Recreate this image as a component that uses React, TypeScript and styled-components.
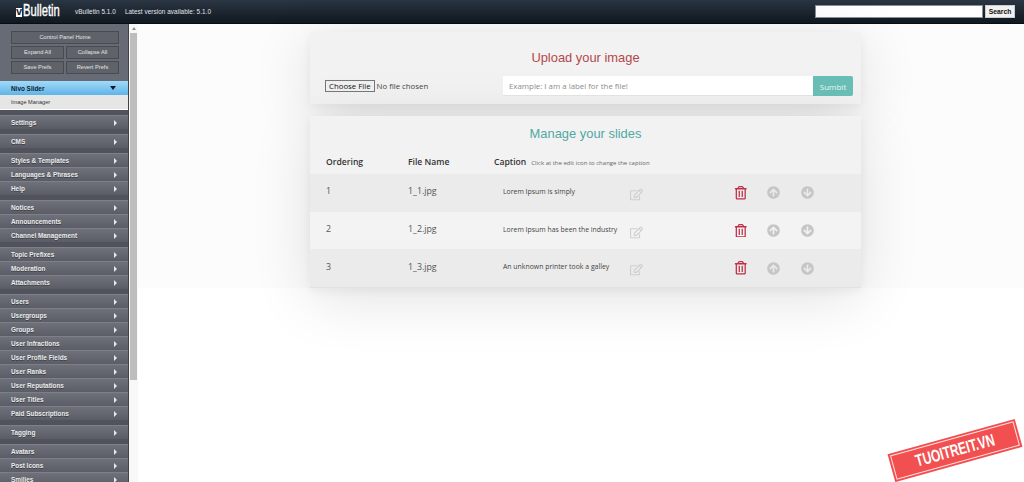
import { createGlobalStyle, styled } from 'styled-components'
import { FaArrowCircleUp, FaArrowCircleDown, FaRegEdit, FaRegTrashAlt } from 'react-icons/fa'

const groups = [
  ['Settings'],
  ['CMS'],
  ['Styles & Templates', 'Languages & Phrases', 'Help'],
  ['Notices', 'Announcements', 'Channel Management'],
  ['Topic Prefixes', 'Moderation', 'Attachments'],
  ['Users', 'Usergroups', 'Groups', 'User Infractions', 'User Profile Fields', 'User Ranks', 'User Reputations', 'User Titles', 'Paid Subscriptions'],
  ['Tagging'],
  ['Avatars', 'Post Icons', 'Smilies'],
]

const slides = [
  { order: 1, file: '1_1.jpg', caption: 'Lorem Ipsum is simply' },
  { order: 2, file: '1_2.jpg', caption: 'Lorem Ipsum has been the industry' },
  { order: 3, file: '1_3.jpg', caption: 'An unknown printer took a galley' },
]

function App() {
  return (
    <Page>
      <GlobalStyle />
      <Header>
        <Logo>
          <LogoMark>v</LogoMark>
          <LogoText>Bulletin</LogoText>
        </Logo>
        <Version>vBulletin 5.1.0</Version>
        <Version>Latest version available: 5.1.0</Version>
        <SearchBox>
          <SearchInput />
          <SearchButton>Search</SearchButton>
        </SearchBox>
      </Header>
      <Body>
        <Sidebar>
          <SideButtons>
            <SideButton $wide>Control Panel Home</SideButton>
            <SideButton>Expand All</SideButton>
            <SideButton>Collapse All</SideButton>
            <SideButton>Save Prefs</SideButton>
            <SideButton>Revert Prefs</SideButton>
          </SideButtons>
          <ActiveItem>
            Nivo Slider
            <ArrowDown />
          </ActiveItem>
          <SubItem>Image Manager</SubItem>
          {groups.map((group) => (
            <NavGroup key={group[0]}>
              {group.map((item) => (
                <NavItem key={item}>
                  {item}
                  <ArrowRight />
                </NavItem>
              ))}
            </NavGroup>
          ))}
        </Sidebar>
        <Scrollbar>
          <ScrollUp />
          <ScrollThumb />
        </Scrollbar>
        <Main>
          <Backdrop>
            <UploadPanel>
              <UploadTitle>Upload your image</UploadTitle>
              <UploadRow>
                <FileField>
                  <ChooseButton>Choose File</ChooseButton>
                  No file chosen
                </FileField>
                <LabelInput placeholder="Example: I am a label for the file!" />
                <SubmitButton>Sumbit</SubmitButton>
              </UploadRow>
            </UploadPanel>
            <ManagePanel>
              <ManageTitle>Manage your slides</ManageTitle>
              <HeadRow>
                <OrderCol>Ordering</OrderCol>
                <FileCol>File Name</FileCol>
                <HeadCaption>
                  Caption
                  <Hint>Click at the edit icon to change the caption</Hint>
                </HeadCaption>
              </HeadRow>
              {slides.map((slide) => (
                <SlideRow key={slide.order} $odd={slide.order % 2 === 1}>
                  <OrderCol>{slide.order}</OrderCol>
                  <FileCol>{slide.file}</FileCol>
                  <CaptionCol>{slide.caption}</CaptionCol>
                  <EditIcon><FaRegEdit /></EditIcon>
                  <TrashIcon><FaRegTrashAlt /></TrashIcon>
                  <MoveIcon><FaArrowCircleUp /></MoveIcon>
                  <MoveIcon><FaArrowCircleDown /></MoveIcon>
                </SlideRow>
              ))}
            </ManagePanel>
          </Backdrop>
        </Main>
      </Body>
      <Stamp>
        <StampInner>
          <StampText>TUOITREIT.VN</StampText>
        </StampInner>
      </Stamp>
    </Page>
  )
}

export default App

const GlobalStyle = createGlobalStyle`
  html, body {
    margin: 0;
    padding: 0;
    background: #fff;
  }
  * {
    box-sizing: border-box;
  }
`

const Page = styled.div`
  position: relative;
  width: 1024px;
  height: 482px;
  overflow: hidden;
  font-family: "Liberation Sans", Arial, sans-serif;
`

const Header = styled.header`
  display: flex;
  align-items: center;
  height: 24px;
  padding: 0 9px 1px 16px;
  background: linear-gradient(#2b3644, #101820);
  border-bottom: 1px solid #0a0d10;
`

const Logo = styled.div`
  display: flex;
  align-items: center;
  width: 59px;
  color: #fff;
`

const LogoMark = styled.span`
  width: 9px;
  height: 9px;
  margin-top: 3px;
  margin-right: 1px;
  background: #fff;
  color: #1c2530;
  font-size: 11px;
  font-weight: 700;
  line-height: 6px;
  text-align: center;
`

const LogoText = styled.span`
  display: inline-block;
  font-size: 16px;
  font-weight: 400;
  -webkit-text-stroke: 0.4px #fff;
  transform: scaleX(0.7);
  transform-origin: left center;
`

const Version = styled.span`
  margin-right: 9px;
  color: #e4e6e8;
  font-size: 6.4px;
  letter-spacing: 0.05px;
`

const SearchBox = styled.div`
  display: flex;
  align-items: center;
  gap: 2px;
  margin-left: auto;
`

const SearchInput = styled.input`
  width: 168px;
  height: 13px;
  padding: 0;
  background: #fff;
  border: 1px solid #8a8f95;
`

const SearchButton = styled.button`
  width: 30px;
  height: 13px;
  padding: 0;
  background: #f1f1f1;
  border: 1px solid #ccc;
  color: #111;
  font-family: inherit;
  font-size: 6.8px;
  font-weight: 700;
`

const Body = styled.div`
  display: flex;
  height: 458px;
`

const Sidebar = styled.nav`
  width: 129px;
  flex-shrink: 0;
  overflow: hidden;
  background: #50535b;
  border-right: 1px solid #3f4249;
`

const SideButtons = styled.div`
  display: grid;
  grid-template-columns: 1fr 1fr;
  grid-auto-rows: 13px;
  align-content: start;
  gap: 2px;
  height: 57px;
  padding: 7px 9px 0 11px;
  background: #666b75;
`

const SideButton = styled.div<{ $wide?: boolean }>`
  grid-column: ${(p) => (p.$wide ? '1 / 3' : 'auto')};
  height: 13px;
  background: #5f6269;
  border: 1px solid #484b52;
  color: #e3e4e6;
  font-size: 5.7px;
  line-height: 11px;
  text-align: center;
`

const ActiveItem = styled.div`
  display: flex;
  align-items: center;
  justify-content: space-between;
  height: 14px;
  padding: 0 11px;
  background: linear-gradient(#a3daf8, #5eb4e8);
  color: #10202e;
  font-size: 6.4px;
  font-weight: 700;
`

const ArrowDown = styled.span`
  width: 0;
  height: 0;
  margin-right: 1px;
  border-top: 4px solid #0f1a24;
  border-left: 3.5px solid transparent;
  border-right: 3.5px solid transparent;
`

const SubItem = styled.div`
  height: 15px;
  padding-left: 11px;
  background: #e6e6e6;
  border-bottom: 1px solid #fff;
  color: #333;
  font-size: 5.6px;
  line-height: 14px;
`

const NavGroup = styled.div`
  margin-top: 5px;
`

const NavItem = styled.div`
  display: flex;
  align-items: center;
  justify-content: space-between;
  height: 14px;
  padding: 0 11px;
  background: linear-gradient(#6e717a, #5a5d66);
  border-top: 1px solid #7d8089;
  color: #eceded;
  font-size: 6.4px;
  font-weight: 700;
  text-shadow: 0 1px 0 #3c3f45;
`

const ArrowRight = styled.span`
  width: 0;
  height: 0;
  border-left: 3px solid #e8e8e8;
  border-top: 3px solid transparent;
  border-bottom: 3px solid transparent;
`

const Scrollbar = styled.div`
  display: flex;
  flex-direction: column;
  align-items: center;
  width: 9px;
  flex-shrink: 0;
  background: #f8f8f8;
`

const ScrollUp = styled.div`
  width: 0;
  height: 0;
  margin: 3px 0 3px;
  border-bottom: 3px solid #8c8c8c;
  border-left: 2.5px solid transparent;
  border-right: 2.5px solid transparent;
`

const ScrollThumb = styled.div`
  width: 7px;
  height: 347px;
  background: #bdbdbd;
`

const Main = styled.main`
  flex: 1;
  min-width: 0;
`

const Backdrop = styled.div`
  height: 264px;
  padding: 8px 163px 0 172px;
  background: #fcfcfc;
`

const Panel = styled.section`
  width: 551px;
  background: #f2f2f2;
  box-shadow: 0 10px 60px rgba(0, 0, 0, 0.12), 0 3px 10px rgba(0, 0, 0, 0.05);
`

const UploadPanel = styled(Panel)`
  height: 72px;
  padding-top: 19px;
`

const ManagePanel = styled(Panel)`
  height: 172px;
  margin-top: 12px;
  border-bottom: 1px solid #e2e2e2;
`

const UploadTitle = styled.h2`
  margin: 0;
  color: #b5474b;
  font-size: 12.9px;
  font-weight: 400;
  line-height: 14px;
  text-align: center;
`

const ManageTitle = styled.h2`
  margin: 0;
  padding-top: 10px;
  color: #4fa8a5;
  font-size: 12.9px;
  font-weight: 400;
  line-height: 15px;
  text-align: center;
`

const UploadRow = styled.div`
  display: flex;
  align-items: center;
  margin-top: 11px;
  padding: 0 8px 0 15px;
`

const FileField = styled.div`
  display: flex;
  align-items: center;
  gap: 2px;
  width: 178px;
  color: #444;
  font-family: "Open Sans", sans-serif;
  font-size: 7.8px;
`

const ChooseButton = styled.button`
  height: 12px;
  padding: 0 3px;
  background: #efefef;
  border: 1px solid #777;
  color: #111;
  font-family: inherit;
  font-size: 7.8px;
  line-height: 10px;
`

const LabelInput = styled.input`
  width: 310px;
  height: 20px;
  padding: 0 6px;
  background: #fff;
  border: 0;
  border-bottom: 1px solid #e2e2e2;
  font-family: "Open Sans", sans-serif;
  font-size: 7.85px;
  &::placeholder {
    color: #8c8c8c;
  }
`

const SubmitButton = styled.button`
  width: 40px;
  height: 20px;
  padding: 0;
  background: #68bdb4;
  border: 0;
  border-radius: 0 2px 2px 0;
  color: #e8f6f4;
  font-family: "Open Sans", sans-serif;
  font-size: 8px;
`

const HeadRow = styled.div`
  display: flex;
  align-items: center;
  height: 24px;
  margin-top: 9px;
  padding-left: 16px;
  color: #333;
  font-family: "Open Sans", sans-serif;
  font-size: 8.6px;
  font-weight: 600;
`

const SlideRow = styled.div<{ $odd: boolean }>`
  display: flex;
  align-items: center;
  height: 37.7px;
  padding: 0 0 3px 16px;
  background: ${(p) => (p.$odd ? '#ebebeb' : '#f3f3f3')};
  color: #555;
  font-family: "Open Sans", sans-serif;
  font-size: 8.8px;
`

const OrderCol = styled.div`
  width: 82px;
`

const FileCol = styled.div`
  width: 86px;
`

const HeadCaption = styled.div`
  display: flex;
  align-items: baseline;
`

const Hint = styled.span`
  margin-left: 5px;
  color: #666;
  font-size: 6px;
  font-weight: 400;
`

const CaptionCol = styled.div`
  width: 136px;
  padding-left: 9px;
  color: #444;
  font-size: 6.9px;
`

const EditIcon = styled.div`
  display: flex;
  width: 104px;
  margin-top: 6px;
  color: #cfcfcf;
  font-size: 13px;
`

const TrashIcon = styled.div`
  display: flex;
  width: 33px;
  margin-top: 3px;
  color: #bf2f47;
  font-size: 13.5px;
`

const MoveIcon = styled.div`
  display: flex;
  width: 34px;
  margin-top: 3px;
  color: #c6c6c6;
  font-size: 13px;
`

const Stamp = styled.div`
  position: absolute;
  left: 889px;
  top: 436px;
  width: 132px;
  height: 29px;
  padding: 2px;
  background: #f25050;
  transform: rotate(-15.5deg);
`

const StampInner = styled.div`
  display: flex;
  align-items: center;
  justify-content: center;
  height: 100%;
  border: 1px solid #ffe3e3;
`

const StampText = styled.span`
  display: inline-block;
  color: #fff;
  font-size: 17px;
  font-weight: 700;
  line-height: 23px;
  transform: scaleX(0.7);
`
